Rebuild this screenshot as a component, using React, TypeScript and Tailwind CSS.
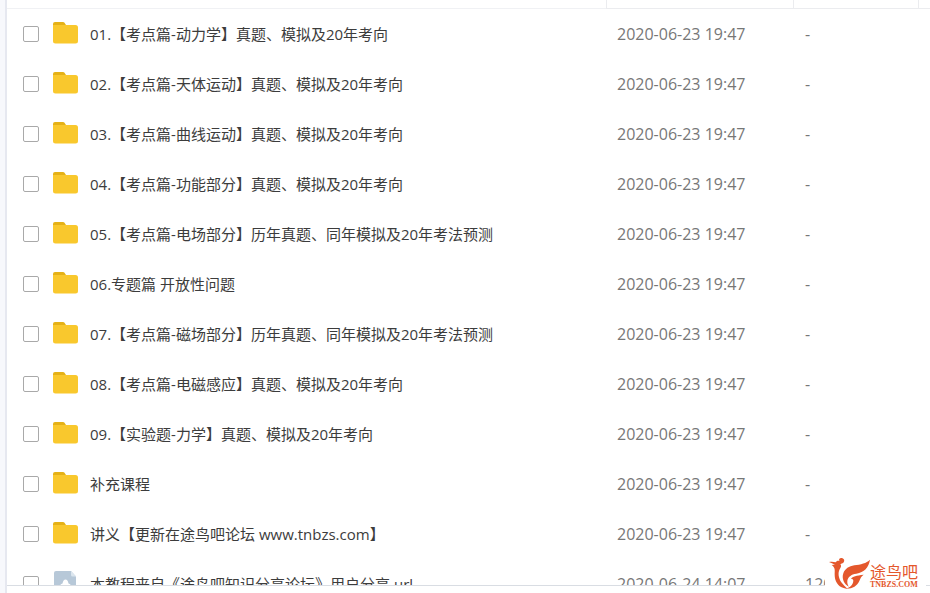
import React, { useState } from 'react';

interface FileItem {
  name: string;
  date: string;
  size: string;
  type: 'folder' | 'file';
}

const files: FileItem[] = [
  { name: '01.【考点篇-动力学】真题、模拟及20年考向', date: '2020-06-23 19:47', size: '-', type: 'folder' },
  { name: '02.【考点篇-天体运动】真题、模拟及20年考向', date: '2020-06-23 19:47', size: '-', type: 'folder' },
  { name: '03.【考点篇-曲线运动】真题、模拟及20年考向', date: '2020-06-23 19:47', size: '-', type: 'folder' },
  { name: '04.【考点篇-功能部分】真题、模拟及20年考向', date: '2020-06-23 19:47', size: '-', type: 'folder' },
  { name: '05.【考点篇-电场部分】历年真题、同年模拟及20年考法预测', date: '2020-06-23 19:47', size: '-', type: 'folder' },
  { name: '06.专题篇 开放性问题', date: '2020-06-23 19:47', size: '-', type: 'folder' },
  { name: '07.【考点篇-磁场部分】历年真题、同年模拟及20年考法预测', date: '2020-06-23 19:47', size: '-', type: 'folder' },
  { name: '08.【考点篇-电磁感应】真题、模拟及20年考向', date: '2020-06-23 19:47', size: '-', type: 'folder' },
  { name: '09.【实验题-力学】真题、模拟及20年考向', date: '2020-06-23 19:47', size: '-', type: 'folder' },
  { name: '补充课程', date: '2020-06-23 19:47', size: '-', type: 'folder' },
  { name: '讲义【更新在途鸟吧论坛 www.tnbzs.com】', date: '2020-06-23 19:47', size: '-', type: 'folder' },
  { name: '本教程来自《途鸟吧知识分享论坛》用户分享.url', date: '2020-06-24 14:07', size: '120', type: 'file' },
];

function FolderIcon() {
  return (
    <svg width="26" height="24" viewBox="0 0 26 24" className="shrink-0" aria-hidden="true">
      <path d="M0 7V2a2 2 0 0 1 2-2h8a2 2 0 0 1 1.500.7L13 3v4z" fill="#e5b116" />
      <path d="M0 3h22.500a2.500 2.500 0 0 1 2.500 2.500v13.500a2.500 2.500 0 0 1-2.500 2.500H2.500a2.500 2.500 0 0 1-2.500-2.500z" fill="#f9c82d" />
    </svg>
  );
}

function LinkFileIcon() {
  return (
    <svg width="26" height="26" viewBox="0 0 26 26" className="shrink-0" aria-hidden="true">
      <path d="M3 0h15l5 5.500v18.500a2 2 0 0 1-2 2H3a2 2 0 0 1-2-2V2a2 2 0 0 1 2-2z" fill="#b7c8d8" />
      <path d="M18 0l5 5.500H19.500a1.500 1.500 0 0 1-1.500-1.500z" fill="#dce6ee" />
      <path d="M6 16c1-2 2-3 3.500-3.500c.5-2.500 1.500-4 3-4s2.500 1.500 3 4c1.500.5 2.500 1.500 3.500 3.500z" fill="#fff" />
    </svg>
  );
}

function BirdLogo() {
  return (
    <svg width="41" height="31" viewBox="0 0 123 93" fill="#e4572c" aria-hidden="true">
      {/* head, neck and belly */}
      <path d="M0 12C8 10 14 11 20 13C22 8 28 7 32 9C28 4 32 0 38 0C46 1 48 9 43 14C40 17 36 16 34 19C38 22 36 28 32 34C26 45 29 61 37 73C42 80 48 86 55 92C51 92 47 91 44 90C26 85 17 68 17 50C17 38 20 30 8 21C12 20 15 20 18 20C12 17 6 15 0 12Z" />
      {/* raised wing */}
      <path d="M123 5C119 28 106 43 82 47C66 49 57 57 55 68C54 76 57 82 60 86C46 80 37 62 43 46C48 32 60 25 76 22C95 19 112 16 123 5Z" />
      {/* tail */}
      <path d="M66 62C71 55 82 53 104 50C97 54 95 60 91 69C84 84 70 93 50 92C64 88 72 80 73 68C73 64 70 62 66 62Z" />
    </svg>
  );
}

function Watermark() {
  return (
    <div className="absolute right-1 bottom-1 flex items-end bg-white pr-2 pl-1">
      <BirdLogo />
      <div className="flex flex-col text-[#e4572c]">
        <span className="font-['Liberation_Sans','Noto_Sans_CJK_SC',sans-serif] text-base leading-4">途鸟吧</span>
        <span className="font-['Liberation_Serif',serif] text-[8px] leading-2 font-bold">TNBZS.COM</span>
      </div>
    </div>
  );
}

export default function App() {
  const [selected, setSelected] = useState<number[]>([]);

  const toggle = (index: number) => {
    setSelected(prev => (prev.includes(index) ? prev.filter(i => i !== index) : [...prev, index]));
  };

  return (
    <div className="relative flex h-screen overflow-hidden bg-[#f7f8fc] pl-[5px] font-['Open_Sans','Noto_Sans_CJK_SC',sans-serif]">
      <main className="flex min-w-0 flex-1 flex-col border-l-2 border-[#e6e8f0] bg-white pb-[7px]">
        <div className="min-h-0 flex-1 overflow-hidden border-b border-[#d9dde3]">
          <table className="w-full table-fixed border-separate border-spacing-0 text-left">
            <thead>
              <tr className="h-[9px]">
                <th className="border-b border-[#f0f1f4] p-0" />
                <th className="w-[187px] border-b border-l border-[#ebecef] p-0" />
                <th className="w-[125px] border-b border-l border-[#ebecef] p-0" />
                <th className="w-3 border-b border-l border-[#ebecef] p-0" />
              </tr>
            </thead>
            <tbody>
              {files.map((file, index) => (
                <tr key={file.name} className="h-[50px]">
                  <td className="p-0 pl-4">
                    <label className="flex items-center">
                      <input
                        type="checkbox"
                        checked={selected.includes(index)}
                        onChange={() => toggle(index)}
                        className="size-4 shrink-0 appearance-none rounded-[2px] border border-[#a9a9a9] bg-white checked:bg-blue-500"
                      />
                      <span className="flex w-[51px] shrink-0 pl-[14px]">
                        {file.type === 'folder' ? <FolderIcon /> : <LinkFileIcon />}
                      </span>
                      <span className="truncate text-[15px] leading-6 text-[#3c3c3c]">{file.name}</span>
                    </label>
                  </td>
                  <td className="p-0 pl-[11px] text-base text-[#777]">{file.date}</td>
                  <td className="p-0 pl-3 text-base text-[#777]">{file.size}</td>
                  <td className="p-0" />
                </tr>
              ))}
            </tbody>
          </table>
        </div>
      </main>
      <Watermark />
    </div>
  );
}
